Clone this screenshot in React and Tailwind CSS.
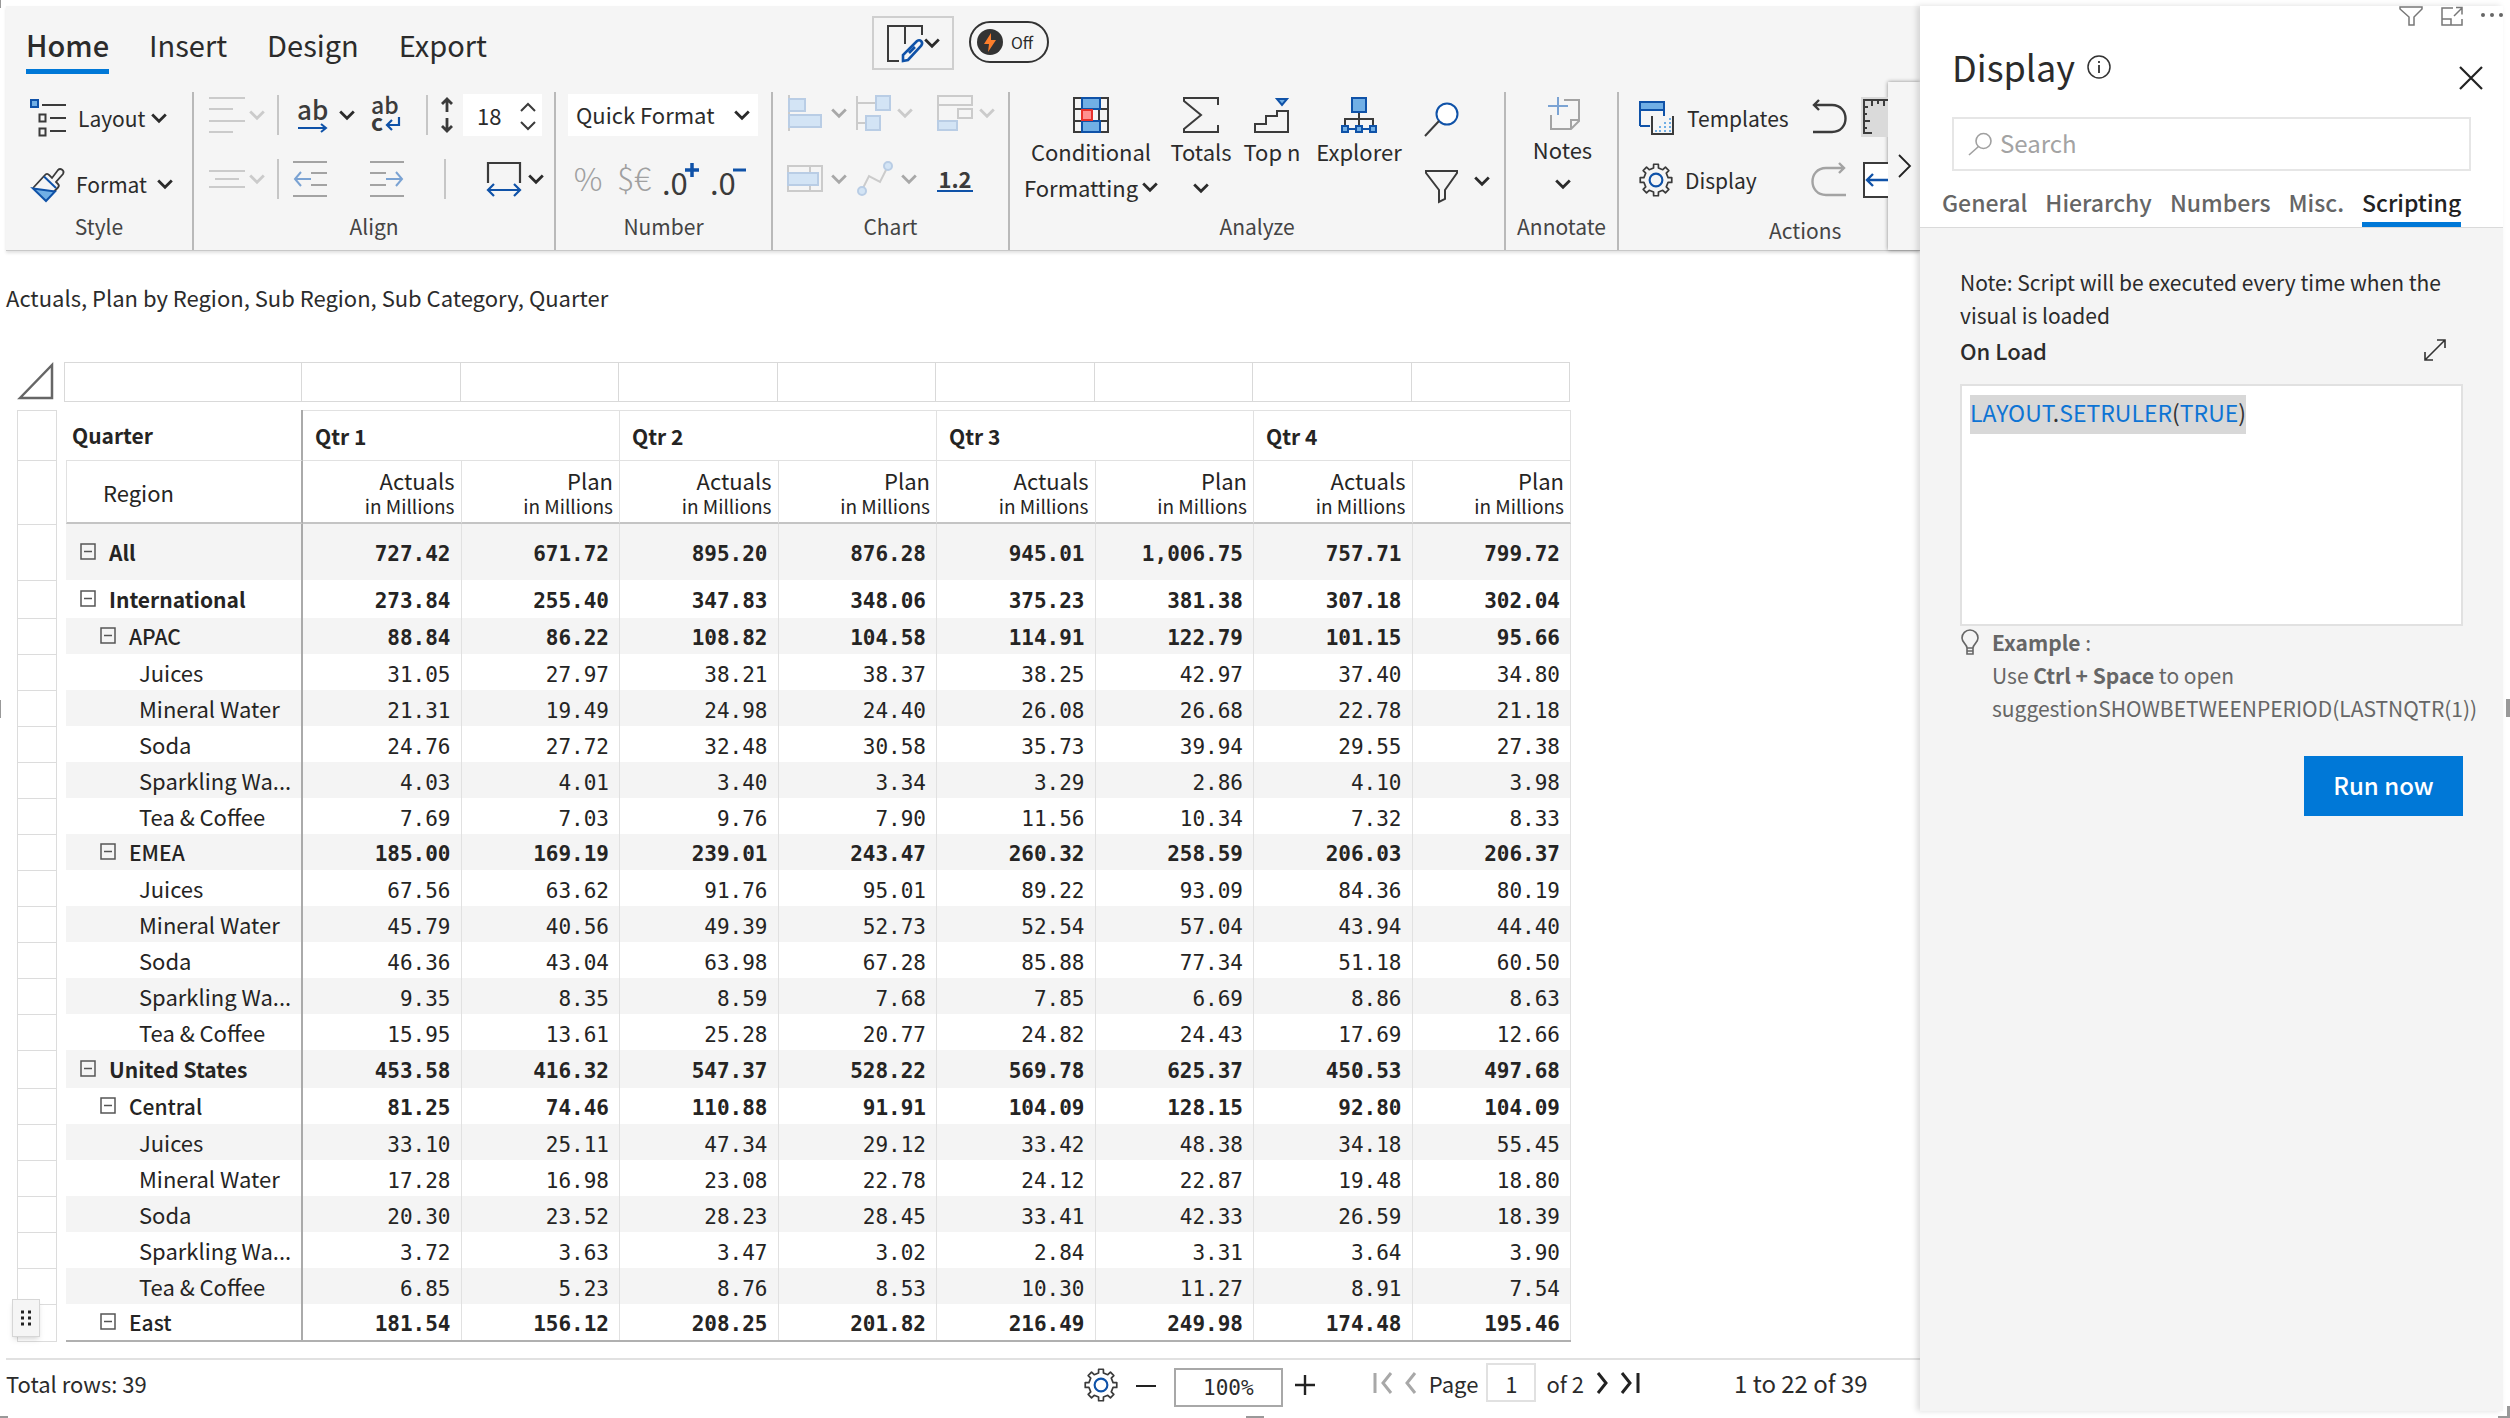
import React, { useState } from 'react';

const INK = '#3b3b3b';
const BLUE = '#0f52a8';
const SKY = '#71afe5';
const PALE_BLUE = '#b9cde5';
const PALE_FILL = '#d3e4f5';
const PALE_GRAY = '#cbcbcb';

const ribbonTabs = ['Home', 'Insert', 'Design', 'Export'];
const panelTabs = ['General', 'Hierarchy', 'Numbers', 'Misc.', 'Scripting'];
const quarters = ['Qtr 1', 'Qtr 2', 'Qtr 3', 'Qtr 4'];

const rows = [
  { level: 'all', name: 'All', values: ['727.42', '671.72', '895.20', '876.28', '945.01', '1,006.75', '757.71', '799.72'] },
  { level: 'region', name: 'International', values: ['273.84', '255.40', '347.83', '348.06', '375.23', '381.38', '307.18', '302.04'] },
  { level: 'sub', name: 'APAC', values: ['88.84', '86.22', '108.82', '104.58', '114.91', '122.79', '101.15', '95.66'] },
  { level: 'leaf', name: 'Juices', values: ['31.05', '27.97', '38.21', '38.37', '38.25', '42.97', '37.40', '34.80'] },
  { level: 'leaf', name: 'Mineral Water', values: ['21.31', '19.49', '24.98', '24.40', '26.08', '26.68', '22.78', '21.18'] },
  { level: 'leaf', name: 'Soda', values: ['24.76', '27.72', '32.48', '30.58', '35.73', '39.94', '29.55', '27.38'] },
  { level: 'leaf', name: 'Sparkling Wa...', values: ['4.03', '4.01', '3.40', '3.34', '3.29', '2.86', '4.10', '3.98'] },
  { level: 'leaf', name: 'Tea & Coffee', values: ['7.69', '7.03', '9.76', '7.90', '11.56', '10.34', '7.32', '8.33'] },
  { level: 'sub', name: 'EMEA', values: ['185.00', '169.19', '239.01', '243.47', '260.32', '258.59', '206.03', '206.37'] },
  { level: 'leaf', name: 'Juices', values: ['67.56', '63.62', '91.76', '95.01', '89.22', '93.09', '84.36', '80.19'] },
  { level: 'leaf', name: 'Mineral Water', values: ['45.79', '40.56', '49.39', '52.73', '52.54', '57.04', '43.94', '44.40'] },
  { level: 'leaf', name: 'Soda', values: ['46.36', '43.04', '63.98', '67.28', '85.88', '77.34', '51.18', '60.50'] },
  { level: 'leaf', name: 'Sparkling Wa...', values: ['9.35', '8.35', '8.59', '7.68', '7.85', '6.69', '8.86', '8.63'] },
  { level: 'leaf', name: 'Tea & Coffee', values: ['15.95', '13.61', '25.28', '20.77', '24.82', '24.43', '17.69', '12.66'] },
  { level: 'region', name: 'United States', values: ['453.58', '416.32', '547.37', '528.22', '569.78', '625.37', '450.53', '497.68'] },
  { level: 'sub', name: 'Central', values: ['81.25', '74.46', '110.88', '91.91', '104.09', '128.15', '92.80', '104.09'] },
  { level: 'leaf', name: 'Juices', values: ['33.10', '25.11', '47.34', '29.12', '33.42', '48.38', '34.18', '55.45'] },
  { level: 'leaf', name: 'Mineral Water', values: ['17.28', '16.98', '23.08', '22.78', '24.12', '22.87', '19.48', '18.80'] },
  { level: 'leaf', name: 'Soda', values: ['20.30', '23.52', '28.23', '28.45', '33.41', '42.33', '26.59', '18.39'] },
  { level: 'leaf', name: 'Sparkling Wa...', values: ['3.72', '3.63', '3.47', '3.02', '2.84', '3.31', '3.64', '3.90'] },
  { level: 'leaf', name: 'Tea & Coffee', values: ['6.85', '5.23', '8.76', '8.53', '10.30', '11.27', '8.91', '7.54'] },
  { level: 'sub', name: 'East', values: ['181.54', '156.12', '208.25', '201.82', '216.49', '249.98', '174.48', '195.46'] },
];

const levels = {
  all: { height: 'h-14', label: 'leading-[56px] pl-3.5 font-bold', value: 'font-bold' },
  region: { height: 'h-[38px]', label: 'leading-[38px] pl-3.5 font-bold', value: 'font-bold' },
  sub: { height: 'h-9', label: 'leading-[36px] pl-[34px] font-medium', value: 'font-bold' },
  leaf: { height: 'h-9', label: 'leading-[36px] pl-[73px] text-[22px] font-normal', value: 'font-normal' },
};

function Svg({ w, h, children, className = '' }) {
  return (
    <svg width={w} height={h} viewBox={`0 0 ${w} ${h}`} fill="none" className={`shrink-0 overflow-visible ${className}`} aria-hidden="true">
      {children}
    </svg>
  );
}

function Chevron({ color = '#2b2b2b', className = '' }) {
  return (
    <Svg w={16} h={10} className={className}>
      <path d="M1.2 1.5 8 8.2l6.8-6.7" stroke={color} strokeWidth="2.8" />
    </Svg>
  );
}

function Gear({ size = 32 }) {
  const points = [];
  for (let i = 0; i < 8; i++) {
    const base = (i * Math.PI) / 4 - Math.PI / 2;
    [[-0.2, 11.6], [-0.15, 15], [0.15, 15], [0.2, 11.6]].forEach(([a, r]) => {
      points.push(`${(16 + r * Math.cos(base + a)).toFixed(2)} ${(16 + r * Math.sin(base + a)).toFixed(2)}`);
    });
  }
  return (
    <svg width={size} height={size} viewBox="0 0 32 32" fill="none" className="shrink-0" aria-hidden="true">
      <path d={`M${points.join('L')}Z`} stroke={INK} strokeWidth="1.600" strokeLinejoin="round" />
      <circle cx="16" cy="16" r="6" stroke={BLUE} strokeWidth="2" />
    </svg>
  );
}

function Divider({ className = '' }) {
  return <span className={`h-10 w-0.5 shrink-0 bg-[#c6c6c6] ${className}`} />;
}

function Group({ label, className = '', children }) {
  return (
    <section className={`flex shrink-0 flex-col border-r-2 border-[#b9b9b9] ${className}`}>
      <div className="h-[122px]">{children}</div>
      <h2 className="text-center text-[21px] leading-6 text-[#444]">{label}</h2>
    </section>
  );
}

function StyleGroup() {
  return (
    <Group label="Style" className="w-[188px]">
      <div className="flex flex-col gap-[18px] pt-0.5 pl-6">
        <button className="flex h-12 items-center">
          <Svg w={36} h={38}>
            <rect x="1" y="1" width="7" height="7" fill={SKY} stroke={BLUE} strokeWidth="2" />
            <path d="M12 6h24M20 19h16M20 32h16" stroke={INK} strokeWidth="2" />
            <path d="M9.500 15.500h6v7h-6zM9.500 29.500h6v7h-6z" stroke={INK} strokeWidth="2" />
          </Svg>
          <span className="ml-3">Layout</span>
          <Chevron className="ml-1.5" />
        </button>
        <button className="flex h-12 items-center">
          <Svg w={36} h={36}>
            <path d="M3 22 15 9c1-1.500 3-1.500 4 0l3 3 6-8c2.500-2.500 7 .5 5 4l-7 8 2 2c1 1 1 2.500 0 3.500l-4 4" stroke={INK} strokeWidth="1.800" />
            <path d="M3 22.500l22 3L16 35z" fill={SKY} stroke={BLUE} strokeWidth="2" />
            <path d="M14 10.500 26 22" stroke={BLUE} strokeWidth="2" />
          </Svg>
          <span className="ml-2.5">Format</span>
          <Chevron className="ml-2.5" />
        </button>
      </div>
    </Group>
  );
}

function AlignGroup() {
  return (
    <Group label="Align" className="w-[362px]">
      <div className="flex h-[46px] items-center pl-[15px]">
        <button className="flex items-center gap-1" aria-label="Vertical alignment">
          <Svg w={36} h={36}>
            <path d="M0 1h36M0 12h24M0 24h36M0 35h24" stroke={PALE_GRAY} strokeWidth="2" />
          </Svg>
          <Chevron color={PALE_GRAY} />
        </button>
        <Divider className="ml-3" />
        <button className="ml-[18px] flex items-center gap-3" aria-label="Overflow text">
          <Svg w={30} h={36}>
            <text x="0" y="23" fontSize="26" fontWeight="500" fill={INK}>ab</text>
            <path d="M1 31h28M24 27l5 4-5 4" stroke={BLUE} strokeWidth="2" />
          </Svg>
          <Chevron />
        </button>
        <button className="ml-4" aria-label="Wrap text">
          <Svg w={30} h={38}>
            <text x="0" y="18" fontSize="23" fontWeight="500" fill={INK}>ab</text>
            <text x="0" y="35" fontSize="23" fontWeight="700" fill={INK}>c</text>
            <path d="M28 21v8H16M21 24l-5 5 5 5" stroke={BLUE} strokeWidth="2.200" />
          </Svg>
        </button>
        <Divider className="ml-[25px]" />
        <Svg w={12} h={36} className="ml-[13px]">
          <path d="M6 2v13M1 7l5-5 5 5M6 21v13M1 29l5 5 5-5" stroke={INK} strokeWidth="2.800" />
        </Svg>
        <div className="relative ml-2.5 flex bg-white">
          <input aria-label="Row height" defaultValue="18" className="h-[42px] w-[79px] bg-transparent pl-3.5 text-[22px] leading-8 outline-none" />
          <div className="absolute top-2 right-1.5 flex flex-col gap-2.5">
            <button className="flex" aria-label="Increase">
              <Svg w={16} h={9}><path d="M1 9l7-7 7 7" stroke={INK} strokeWidth="2" /></Svg>
            </button>
            <button className="flex" aria-label="Decrease">
              <Svg w={16} h={9}><path d="M1 1l7 7 7-7" stroke={INK} strokeWidth="2" /></Svg>
            </button>
          </div>
        </div>
      </div>
      <div className="mt-[18px] flex h-[46px] items-center pl-[15px]">
        <button className="flex items-center gap-1" aria-label="Horizontal alignment">
          <Svg w={36} h={20}>
            <path d="M0 2h36M6 10h24M0 18h36" stroke={PALE_GRAY} strokeWidth="2" />
          </Svg>
          <Chevron color={PALE_GRAY} />
        </button>
        <Divider className="ml-3" />
        <button className="ml-3.5" aria-label="Decrease indent">
          <Svg w={34} h={36}>
            <path d="M0 1h34M18 12h16M18 24h16M0 35h34" stroke="#a3a3a3" strokeWidth="2" />
            <path d="M18 18H2M8 11l-6 7 6 7" stroke="#7ba3d3" strokeWidth="2" />
          </Svg>
        </button>
        <button className="ml-[43px]" aria-label="Increase indent">
          <Svg w={34} h={36}>
            <path d="M0 1h34M0 12h16M0 24h16M0 35h34" stroke="#a3a3a3" strokeWidth="2" />
            <path d="M16 18h16M26 11l6 7-6 7" stroke="#7ba3d3" strokeWidth="2" />
          </Svg>
        </button>
        <Divider className="ml-10" />
        <button className="ml-10 flex items-center gap-1.5" aria-label="Column width">
          <Svg w={36} h={36}>
            <path d="M2 22V2h32v20" stroke={INK} strokeWidth="2.200" />
            <path d="M2 29h32M8 23l-6 6 6 6M28 23l6 6-6 6" stroke={BLUE} strokeWidth="2.200" />
          </Svg>
          <Chevron />
        </button>
      </div>
    </Group>
  );
}

function NumberGroup() {
  return (
    <Group label="Number" className="w-[217px]">
      <div className="flex h-[46px] items-center pl-3">
        <div className="relative bg-white">
          <select aria-label="Quick format" className="h-[42px] w-[190px] appearance-none bg-transparent pb-0.5 pl-2 text-[22px] outline-none">
            <option>Quick Format</option>
          </select>
          <Chevron className="pointer-events-none absolute top-4 right-2" />
        </div>
      </div>
      <div className="mt-[18px] flex h-[46px] items-center gap-2.5 pl-3.5">
        <button className="w-9 pb-1 text-[32px] leading-10 font-light text-[#a0a0a0]">%</button>
        <button className="w-9 pb-1 text-[32px] leading-10 font-light text-[#a0a0a0]">$€</button>
        <button aria-label="Increase decimals">
          <Svg w={38} h={36}>
            <text x="0" y="34" fontSize="31" fill={INK}>.0</text>
            <path d="M23 9h14M30 2v14" stroke={BLUE} strokeWidth="3.500" />
          </Svg>
        </button>
        <button aria-label="Decrease decimals">
          <Svg w={36} h={36}>
            <text x="0" y="34" fontSize="31" fill={INK}>.0</text>
            <path d="M23 9h13" stroke={BLUE} strokeWidth="3" />
          </Svg>
        </button>
      </div>
    </Group>
  );
}

function ChartGroup() {
  return (
    <Group label="Chart" className="w-[237px]">
      <div className="flex h-[42px] items-center pl-[14px]">
        <button className="flex items-center gap-2" aria-label="Bar chart">
          <Svg w={36} h={36}>
            <path d="M2 0v36" stroke={PALE_GRAY} strokeWidth="2" />
            <path d="M2 4h16v12H2zM2 20h32v12H2z" fill={PALE_FILL} stroke={PALE_BLUE} strokeWidth="2" />
          </Svg>
          <Chevron color="#a8a8a8" />
        </button>
        <button className="ml-2 flex items-center gap-1.5" aria-label="Variance chart">
          <Svg w={36} h={36}>
            <path d="M2 1v34M2 8h18M2 28h9" stroke={PALE_GRAY} strokeWidth="2" />
            <path d="M21 1h14v14H21zM11 21h14v14H11z" fill={PALE_FILL} stroke={PALE_BLUE} strokeWidth="2" />
          </Svg>
          <Chevron color={PALE_GRAY} />
        </button>
        <button className="ml-6 flex items-center gap-1.5" aria-label="Stacked chart">
          <Svg w={36} h={36}>
            <path d="M1 1h34v9H1zM1 10v16M21 14h14v9H21z" stroke={PALE_GRAY} strokeWidth="2" />
            <path d="M1 26h19v9H1z" fill={PALE_FILL} stroke={PALE_BLUE} strokeWidth="2" />
          </Svg>
          <Chevron color={PALE_GRAY} />
        </button>
      </div>
      <div className="mt-[22px] flex h-[46px] items-center pl-[14px]">
        <button className="flex items-center gap-2" aria-label="Bullet chart">
          <Svg w={36} h={28}>
            <path d="M1 1h34v25H1zM23 1v25" stroke={PALE_GRAY} strokeWidth="2" />
            <path d="M1 8h30v12H1z" fill={PALE_FILL} stroke={PALE_BLUE} strokeWidth="2" />
          </Svg>
          <Chevron color="#a8a8a8" />
        </button>
        <button className="ml-2 flex items-center gap-2" aria-label="Sparkline">
          <Svg w={38} h={38}>
            <path d="M7 30l7-14 11 6 8-16" stroke={PALE_GRAY} strokeWidth="2" />
            <circle cx="33" cy="6" r="4" fill={PALE_FILL} stroke={PALE_BLUE} strokeWidth="2" />
            <circle cx="7" cy="31" r="4" fill={PALE_FILL} stroke={PALE_BLUE} strokeWidth="2" />
          </Svg>
          <Chevron color="#a8a8a8" />
        </button>
        <button className="ml-5 w-9 border-b-2 border-[#0f52a8] text-[22px] leading-6 font-semibold text-[#3b3b3b]">1.2</button>
      </div>
    </Group>
  );
}

function AnalyzeGroup() {
  return (
    <Group label="Analyze" className="w-[496px]">
      <div className="flex pt-[5px] pl-3 text-[22px]">
        <button className="flex w-[138px] flex-col items-center">
          <Svg w={36} h={36}>
            <path d="M1 1h34v34H1zM1 12h34M1 24h34M26 1v34" stroke={INK} strokeWidth="2" />
            <path d="M9 1h18v11H9zM9 24h18v11H9z" fill={SKY} stroke={BLUE} strokeWidth="2" />
            <path d="M9 13h10v10H9z" fill="#ff9090" stroke="#e8302a" strokeWidth="2" />
          </Svg>
          <span className="leading-9">Conditional</span>
          <span className="flex items-center leading-9">
            Formatting
            <Chevron className="ml-1" />
          </span>
        </button>
        <button className="ml-2 flex w-[66px] flex-col items-center">
          <Svg w={36} h={36}>
            <path d="M35 8V1H1v3l17 14L1 32v3h34v-7" stroke={INK} strokeWidth="2" />
          </Svg>
          <span className="leading-9">Totals</span>
          <Chevron className="mt-3.5" />
        </button>
        <button className="ml-2 flex w-[60px] flex-col items-center">
          <Svg w={36} h={36}>
            <path d="M1 35v-8h11v-8h11v-5h11v21z" stroke={INK} strokeWidth="2" />
            <path d="M23 2h10l-5 6z" fill={SKY} stroke={BLUE} strokeWidth="2" />
          </Svg>
          <span className="leading-9">Top n</span>
        </button>
        <button className="ml-3 flex w-[90px] flex-col items-center">
          <Svg w={36} h={36}>
            <path d="M18 15v14M4 29v-7h28v7" stroke={INK} strokeWidth="2" />
            <path d="M4 32h28" stroke={BLUE} strokeWidth="2" />
            <path d="M11 1h14v14H11z" fill={SKY} stroke={BLUE} strokeWidth="2" />
            <path d="M1 29h6v6H1zM15 29h6v6h-6zM29 29h6v6h-6z" fill={SKY} stroke={BLUE} strokeWidth="2" />
          </Svg>
          <span className="leading-9">Explorer</span>
        </button>
        <div className="ml-5 flex flex-col gap-8 pt-[5px]">
          <button aria-label="Find">
            <Svg w={36} h={36}>
              <circle cx="23" cy="12" r="10.500" fill="#fff" stroke={BLUE} strokeWidth="2" />
              <path d="M15 19 1 34" stroke={INK} strokeWidth="2" />
            </Svg>
          </button>
          <button className="flex items-center gap-3.5" aria-label="Filter">
            <Svg w={36} h={34}>
              <path d="M2 1h31v2L21 20v9l-6 3V20L2 3z" stroke={INK} strokeWidth="2" />
            </Svg>
            <Chevron className="-mt-3" />
          </button>
        </div>
      </div>
    </Group>
  );
}

function AnnotateGroup() {
  return (
    <Group label="Annotate" className="w-[113px]">
      <button className="flex w-full flex-col items-center pt-[5px] pl-0.5 text-[22px]">
        <Svg w={34} h={34}>
          <path d="M18 3h15v21l-8 8H5V18M33 23h-8v9" stroke="#a3a3a3" strokeWidth="2" />
          <path d="M2 9h20M12 0v18" stroke="#7ba3d3" strokeWidth="2" />
        </Svg>
        <span className="leading-9">Notes</span>
        <Chevron className="mt-3" />
      </button>
    </Group>
  );
}

function ActionsGroup() {
  return (
    <section className="relative flex min-w-0 flex-1 flex-col overflow-hidden">
      <div className="flex h-[126px] pt-[3px]">
        <div className="ml-5 flex w-[150px] shrink-0 flex-col gap-4">
          <button className="flex h-[46px] items-center gap-3">
            <Svg w={36} h={34}>
              <path d="M1 25V1h24v14M1 25h10" stroke={BLUE} strokeWidth="2" />
              <path d="M1 1h24v8H1z" fill={SKY} stroke={BLUE} strokeWidth="2" />
              <path d="M13 15v18h21V15" stroke={INK} strokeWidth="2" />
              <path d="M30 18h2M25 22h2M30 22h2M20 26h2M25 26h2M30 26h2M16 30h2M20 30h2M25 30h2M30 30h2" stroke={SKY} strokeWidth="2" />
            </Svg>
            Templates
          </button>
          <button className="flex h-[46px] items-center gap-3">
            <Gear size={34} />
            Display
          </button>
        </div>
        <div className="ml-[22px] flex shrink-0 flex-col gap-[26px] pt-1">
          <button aria-label="Undo">
            <Svg w={36} h={36}>
              <path d="M2 33h19c18 0 18-27 0-27H3M8 1 3 6l5 5" stroke={INK} strokeWidth="2.400" />
            </Svg>
          </button>
          <button aria-label="Redo">
            <Svg w={36} h={36}>
              <path d="M35 34H15c-18 0-18-27 0-27h18M28 2l5 5-5 5" stroke="#a3a3a3" strokeWidth="2.400" />
            </Svg>
          </button>
        </div>
        <div className="ml-3.5 flex shrink-0 flex-col gap-6 pt-0.5">
          <button className="bg-[#dadada]" aria-label="Ruler">
            <Svg w={40} h={40}>
              <path d="M40 3H3v33h8M3 10h4M3 17h3M3 24h6M3 31h3M11 3v6M17 3v4M23 3v6" stroke={INK} strokeWidth="2" />
            </Svg>
          </button>
          <button aria-label="Fit width">
            <Svg w={40} h={38}>
              <path d="M40 2H3v34h37" fill="#fff" stroke={INK} strokeWidth="2" />
              <path d="M40 19H6M12 13l-6 6 6 6" stroke={BLUE} strokeWidth="2.400" />
            </Svg>
          </button>
        </div>
      </div>
      <h2 className="ml-[150px] text-[21px] leading-6 text-[#444]">Actions</h2>
    </section>
  );
}

function Ribbon() {
  const [active, setActive] = useState('Home');
  return (
    <header className="relative border-b border-[#c8c8c8] bg-[#f5f5f5] shadow-[0_2px_3px_rgba(0,0,0,0.12)]">
      <div className="flex h-[86px]">
        <nav className="flex w-[866px] items-start gap-10 pt-[18px] pl-5">
          {ribbonTabs.map((tab) => (
            <button
              key={tab}
              onClick={() => setActive(tab)}
              className={`border-b-[5px] pb-[5px] text-[29px] leading-10 ${
                active === tab ? 'border-[#0078d7] font-medium' : 'border-transparent'
              }`}
            >
              {tab}
            </button>
          ))}
        </nav>
        <button className="mt-2.5 flex h-[54px] w-[82px] items-center border-2 border-[#cfcfcf] pl-3" aria-label="Edit layout">
          <Svg w={38} h={38}>
            <path d="M36 11V2H2v35h11M19 2v18" stroke={INK} strokeWidth="2" />
            <path d="M17 37v-6l14-14c3-2 7 1 4 5L22 36zM23 29l6-6" stroke={BLUE} strokeWidth="2.600" />
          </Svg>
          <Chevron />
        </button>
        <button className="mt-[15px] ml-[15px] flex h-[42px] w-20 items-center gap-2 rounded-full border-2 border-[#333] pl-1.5 text-[16px]">
          <Svg w={26} h={26}>
            <circle cx="13" cy="13" r="13" fill="#333" />
            <path d="M14 4 7 15h5l-1 8 8-12h-5z" fill="#fd7e2b" />
          </Svg>
          Off
        </button>
      </div>
      <div className="flex h-[158px]">
        <StyleGroup />
        <AlignGroup />
        <NumberGroup />
        <ChartGroup />
        <AnalyzeGroup />
        <AnnotateGroup />
        <ActionsGroup />
        <button className="-mt-2.5 flex w-8 shrink-0 items-center justify-center bg-[#f5f5f5] shadow-[0_0_4px_rgba(0,0,0,0.45)]" aria-label="More">
          <Svg w={14} h={24}><path d="M2 1l11 11L2 23" stroke="#222" strokeWidth="1.800" /></Svg>
        </button>
      </div>
    </header>
  );
}

function Collapse() {
  return (
    <button className="mr-[13px] align-baseline" aria-label="Collapse">
      <Svg w={16} h={18}>
        <path d="M1 1h14v15H1zM4 8.500h8" stroke="#555" strokeWidth="1.500" />
      </Svg>
    </button>
  );
}

function RulerColumn() {
  return (
    <div className="relative ml-[11px] w-10 shrink-0 border border-[#dcdcdc]">
      <div className="h-[49px]" />
      <div className="h-16 border-t border-[#dcdcdc]" />
      {rows.map((row, i) => (
        <div key={i} className={`border-t border-[#dcdcdc] ${levels[row.level].height}`} />
      ))}
      <button className="absolute bottom-1 -left-1.5 flex h-[38px] w-7 items-center justify-center border border-[#d6d6d6] bg-[#f5f5f5] shadow-md" aria-label="Drag">
        <Svg w={10} h={16}>
          <path d="M0 2h3M7 2h3M0 8h3M7 8h3M0 14h3M7 14h3" stroke="#222" strokeWidth="3" />
        </Svg>
      </button>
    </div>
  );
}

function Matrix() {
  return (
    <table className="ml-[9px] w-[1505px] table-fixed border-separate border-spacing-0 border-b-2 border-[#b0b0b0] text-[#252423]">
      <colgroup>
        <col className="w-[237px]" />
        {rows[0].values.map((v) => <col key={v} />)}
      </colgroup>
      <thead>
        <tr className="h-[50px]">
          <th className="border-r-2 border-[#aaa] pl-1.5 text-left font-bold">Quarter</th>
          {quarters.map((q) => (
            <th key={q} colSpan={2} className="border-t border-r border-[#e1e1e1] pl-3 text-left font-bold">{q}</th>
          ))}
        </tr>
        <tr className="h-16">
          <th className="border-t border-r-2 border-b-2 border-l border-t-[#e1e1e1] border-r-[#aaa] border-b-[#c4c4c4] border-l-[#e1e1e1] pl-9 text-left text-[22px] font-normal">Region</th>
          {rows[0].values.map((v, i) => (
            <th key={v} className="border-t border-r border-b-2 border-t-[#e1e1e1] border-r-[#e1e1e1] border-b-[#c4c4c4] pr-1.5 text-right text-[22px] leading-7 font-normal">
              {i % 2 ? 'Plan' : 'Actuals'}
              <div className="text-[19px] leading-6">in Millions</div>
            </th>
          ))}
        </tr>
      </thead>
      <tbody>
        {rows.map((row, i) => {
          const style = levels[row.level];
          return (
            <tr key={i} className={`${style.height} ${i % 2 ? '' : 'bg-[#f4f4f4]'}`}>
              <th scope="row" className={`border-r-2 border-[#aaa] text-left align-baseline whitespace-nowrap ${style.label}`}>
                {row.level !== 'leaf' && <Collapse />}
                {row.name}
              </th>
              {row.values.map((v, c) => (
                <td key={c} className={`border-r border-[#e1e1e1] pr-2.5 text-right align-baseline font-['DejaVu_Sans_Mono',monospace] text-[21px] leading-7 ${style.value}`}>
                  {v}
                </td>
              ))}
            </tr>
          );
        })}
      </tbody>
    </table>
  );
}

function PageArrow({ label, d, w, color }) {
  return (
    <button aria-label={label}>
      <Svg w={w} h={22}><path d={d} stroke={color} strokeWidth="3" /></Svg>
    </button>
  );
}

function Footer() {
  return (
    <footer className="mt-4 flex h-[53px] items-center border-t-2 border-[#e1e1e1] pb-1.5 text-[22px]">
      <span>Total rows: 39</span>
      <div className="ml-auto flex items-center">
        <div className="flex items-center pt-1">
          <button aria-label="Settings"><Gear size={34} /></button>
          <button className="ml-[18px]" aria-label="Zoom out">
            <Svg w={20} h={20}><path d="M0 11h20" stroke="#222" strokeWidth="2" /></Svg>
          </button>
          <input aria-label="Zoom" defaultValue="100%" className="mt-1.5 ml-[18px] h-[39px] w-[109px] border-2 border-[#a8a8a8] bg-white text-center font-['DejaVu_Sans_Mono',monospace] text-[21px] outline-none" />
          <button className="ml-3" aria-label="Zoom in">
            <Svg w={20} h={20}><path d="M0 10h20M10 0v20" stroke="#222" strokeWidth="2.400" /></Svg>
          </button>
        </div>
        <div className="ml-[58px] flex items-center gap-3">
          <PageArrow label="First page" w={20} color="#a8a8a8" d="M2 1v20M18 1l-8 10 8 10" />
          <PageArrow label="Previous page" w={12} color="#a8a8a8" d="M10 1 2 11l8 10" />
          <label htmlFor="page">Page</label>
        </div>
        <input id="page" defaultValue="1" className="ml-2 h-[39px] w-[50px] border-2 border-[#e1e1e1] bg-white text-center outline-none" />
        <div className="ml-2.5 flex items-center gap-3">
          <span>of 2</span>
          <PageArrow label="Next page" w={12} color="#222" d="M2 1l8 10-8 10" />
          <PageArrow label="Last page" w={20} color="#222" d="M2 1l8 10-8 10M18 1v20" />
        </div>
      </div>
      <span className="mr-10 ml-[94px] w-[146px] text-[24px] whitespace-nowrap">1 to 22 of 39</span>
    </footer>
  );
}

function DisplayPanel() {
  const [tab, setTab] = useState('Scripting');
  return (
    <aside className="relative z-10 mr-[7px] flex w-[583px] shrink-0 flex-col bg-white shadow-[-3px_0_6px_rgba(0,0,0,0.14)]">
      <div className="flex h-5 items-center justify-end gap-[18px]">
        <Svg w={24} h={20}>
          <path d="M1 1h22v2l-8 8v8h-5v-8L1 3z" stroke="#777" strokeWidth="1.500" />
        </Svg>
        <Svg w={22} h={20}>
          <path d="M12 2H1v17h20v-6M1 13h9v6M13 10 21 2M15 1.500h6v7" stroke="#777" strokeWidth="1.500" />
        </Svg>
        <Svg w={22} h={20}>
          <circle cx="2" cy="9" r="2" fill="#666" />
          <circle cx="11" cy="9" r="2" fill="#666" />
          <circle cx="20" cy="9" r="2" fill="#666" />
        </Svg>
      </div>
      <div className="mt-3 flex items-center pr-5 pl-8">
        <h1 className="text-[36px] leading-14">Display</h1>
        <Svg w={24} h={24} className="ml-3">
          <circle cx="12" cy="13" r="11" stroke="#333" strokeWidth="1.500" />
          <path d="M12 11v8M12 7v2" stroke="#333" strokeWidth="1.800" />
        </Svg>
        <button className="mb-1 ml-auto self-end" aria-label="Close">
          <Svg w={24} h={24}><path d="M1 1l22 22M23 1 1 23" stroke="#222" strokeWidth="2.200" /></Svg>
        </button>
      </div>
      <div className="mx-8 mt-[23px] flex h-[54px] items-center border-2 border-[#e6e6e6] pl-3.5">
        <Svg w={24} h={24}>
          <circle cx="15.500" cy="9" r="7.500" stroke="#a0a0a0" strokeWidth="1.600" />
          <path d="M10.500 14.500 1 23" stroke="#a0a0a0" strokeWidth="1.600" />
        </Svg>
        <input aria-label="Search" placeholder="Search" className="mb-0.5 ml-2 flex-1 text-[24px] leading-8 outline-none placeholder:text-[#a3a3a3]" />
      </div>
      <div className="mt-[15px] flex gap-[18px] border-b border-[#dadada] pl-[22px]">
        {panelTabs.map((name) => (
          <button
            key={name}
            onClick={() => setTab(name)}
            className={`border-b-[5px] pb-1 text-[23px] leading-8 font-medium ${
              tab === name ? 'border-[#0078d7] text-[#222]' : 'border-transparent text-[#666]'
            }`}
          >
            {name}
          </button>
        ))}
      </div>
      <div className="flex-1 bg-[#f4f4f4] pt-[38px] pr-10 pl-10">
        <p className="text-[21px] leading-[33px]">Note: Script will be executed every time when the visual is loaded</p>
        <div className="mt-0.5 flex items-center justify-between pr-4">
          <label htmlFor="script" className="text-[22px] leading-8 font-medium">On Load</label>
          <button aria-label="Expand editor">
            <Svg w={24} h={24}>
              <path d="M2 22 22 2M14 2h8v8M2 14v8h8" stroke="#333" strokeWidth="1.600" />
            </Svg>
          </button>
        </div>
        <div className="relative mt-[18px] h-[242px] border-2 border-[#e1e1e1] bg-white">
          <pre className="absolute top-[9px] left-2 bg-[#d8d8d8] pb-1 font-['Noto_Sans_CJK_JP',sans-serif] text-[23px] leading-[35px] text-[#0e74d4]" aria-hidden="true">
            LAYOUT<span className="text-[#333]">.</span>SETRULER<span className="text-[#333]">(</span>TRUE<span className="text-[#333]">)</span>
          </pre>
          <textarea id="script" className="relative block size-full resize-none bg-transparent px-2 py-[9px] outline-none" />
        </div>
        <div className="flex gap-3 text-[21px] leading-[33px] text-[#666]">
          <Svg w={20} h={26} className="mt-1">
            <path d="M7 18c0-4-5-5-5-10a8 8 0 0 1 16 0c0 5-5 6-5 10zM7 18v6h6v-6M7 21h6" stroke="#666" strokeWidth="1.600" />
          </Svg>
          <div className="whitespace-nowrap">
            <p><b>Example</b> :</p>
            <p>Use <b>Ctrl + Space</b> to open</p>
            <p>suggestionSHOWBETWEENPERIOD(LASTNQTR(1))</p>
          </div>
        </div>
        <button className="mt-[31px] ml-auto block h-[60px] w-[159px] bg-[#0078d7] pb-0.5 text-[24px] font-medium text-white">Run now</button>
      </div>
    </aside>
  );
}

export default function App() {
  return (
    <div className="relative flex min-h-screen bg-white pt-1.5 pb-[7px] pl-1.5 font-['Noto_Sans_CJK_JP',sans-serif] text-[21px] leading-8 text-[#2b2b2b]">
      <main className="flex min-w-0 flex-1 flex-col">
        <Ribbon />
        <p className="mt-[30px] text-[22px]">Actuals, Plan by Region, Sub Region, Sub Category, Quarter</p>
        <div className="mt-[49px] flex">
          <Svg w={36} h={40} className="ml-3">
            <path d="M2 36 34 3v33z" stroke="#666" strokeWidth="2.500" />
          </Svg>
          <div className="ml-2.5 flex h-10 w-[1506px] border border-[#d9d9d9]">
            <div className="w-[236px]" />
            {rows[0].values.map((v) => <div key={v} className="flex-1 border-l border-[#d9d9d9]" />)}
          </div>
        </div>
        <div className="mt-2 flex">
          <RulerColumn />
          <Matrix />
        </div>
        <Footer />
      </main>
      <DisplayPanel />

      {/* Selection handles of the visual frame */}
      <span className="absolute top-0 left-0 h-2 w-px bg-[#999]" />
      <span className="absolute top-[700px] left-0 h-[18px] w-px bg-[#999]" />
      <span className="absolute top-[699px] right-0 h-[18px] w-1 bg-[#999]" />
      <span className="absolute bottom-0 left-0 h-0.5 w-2 bg-[#999]" />
      <span className="absolute bottom-0 left-1/2 h-0.5 w-[18px] -translate-x-1/2 bg-[#999]" />
      <span className="absolute right-0 bottom-0 h-3 w-3 border-r-[3px] border-b-2 border-[#999]" />
    </div>
  );
}
